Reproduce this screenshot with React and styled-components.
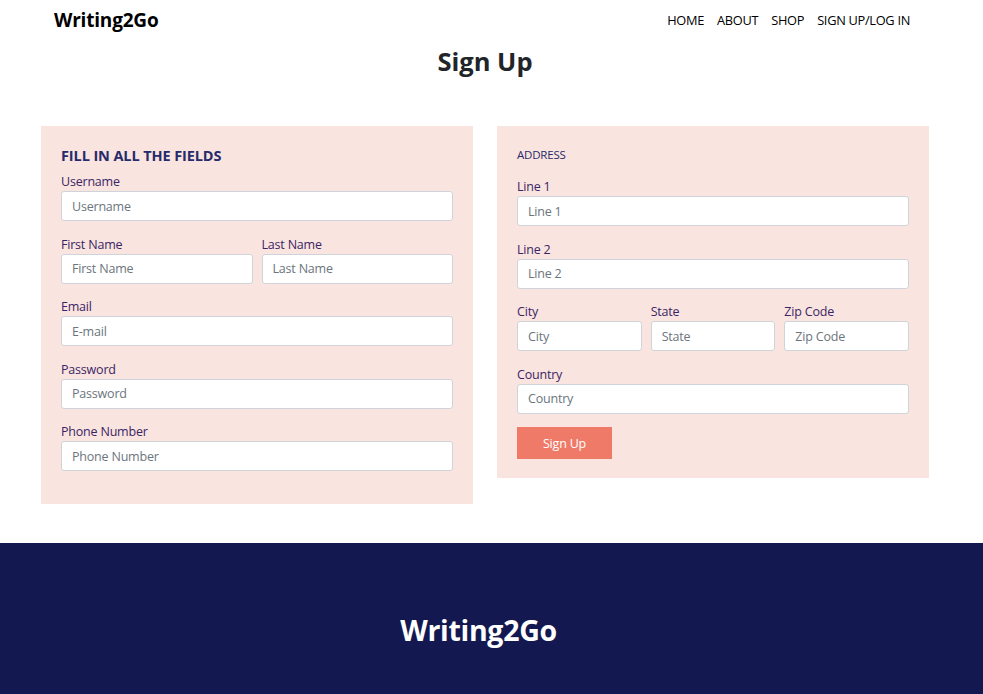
import React from "react";
import styled, { createGlobalStyle } from "styled-components";

const Global = createGlobalStyle`
  html, body { margin: 0; padding: 0; background: #fff; }
  body { font-family: "Open Sans", "Noto Sans", sans-serif; color: #212529; }
  * { box-sizing: border-box; }
`;

const Nav = styled.header`
  height: 40px;
  display: flex;
  align-items: center;
  justify-content: space-between;
  padding: 0 73px 0 54px;
`;

const Logo = styled.div`
  font-size: 19px;
  font-weight: 700;
  color: #000;
  letter-spacing: -0.2px;
`;

const Links = styled.nav`
  display: flex;
  gap: 13px;
`;

const NavLink = styled.a`
  font-size: 12.8px;
  color: #000;
  text-decoration: none;
  letter-spacing: -0.3px;
`;

const Title = styled.h1`
  margin: 0;
  padding: 4px 13px 47px 0;
  text-align: center;
  font-size: 25.5px;
  line-height: 35px;
  font-weight: 700;
  color: #212529;
`;

const Cards = styled.main`
  display: grid;
  grid-template-columns: 432px 432px;
  gap: 24px;
  margin-left: 41px;
  align-items: start;
`;

const Card = styled.section`
  background: #f9e4df;
  padding: 20px 20px ${(p) => p.$pb}px;
`;

const Heading = styled.h2`
  margin: 0 0 8px;
  font-size: 14.5px;
  line-height: 20px;
  font-weight: 700;
  color: #272a6b;
  letter-spacing: -0.1px;
`;

const SubHeading = styled.h3`
  margin: 0 0 16px;
  font-size: 11.5px;
  line-height: 17px;
  font-weight: 400;
  color: #272a6b;
  letter-spacing: -0.2px;
`;

const Row = styled.div`
  display: grid;
  grid-template-columns: repeat(${(p) => p.$cols || 1}, minmax(0, 1fr));
  gap: 9px;
  margin-bottom: 15.5px;
`;

const Field = styled.label`
  display: flex;
  flex-direction: column;
  min-width: 0;
`;

const Label = styled.span`
  font-size: 12.5px;
  line-height: 16px;
  margin-bottom: 1px;
  color: #3b2466;
  letter-spacing: -0.2px;
`;

const Input = styled.input`
  width: 100%;
  min-width: 0;
  height: 30px;
  border: 1px solid #ced4da;
  border-radius: 3px;
  background: #fff;
  padding: 0 10px;
  font-family: inherit;
  font-size: 12.5px;
  letter-spacing: -0.2px;
  color: #495057;
  outline: none;
  &::placeholder { color: #6c757d; }
`;

const Button = styled.button`
  display: block;
  margin-top: -2px;
  width: 95px;
  height: 32px;
  border: none;
  background: #ef7a68;
  color: #fff;
  font-family: inherit;
  font-size: 12.5px;
  letter-spacing: -0.2px;
  cursor: pointer;
`;

const Footer = styled.footer`
  margin-top: 39px;
  background: #141850;
  padding: 68px 26px 70px 0;
  text-align: center;
`;

const FooterLogo = styled.div`
  font-size: 28.5px;
  line-height: 38px;
  font-weight: 700;
  color: #fff;
  letter-spacing: -0.3px;
`;

const F = ({ label, ph }) => (
  <Field>
    <Label>{label}</Label>
    <Input placeholder={ph || label} />
  </Field>
);

export default function App() {
  return (
    <>
      <Global />
      <Nav>
        <Logo>Writing2Go</Logo>
        <Links>
          <NavLink href="#">HOME</NavLink>
          <NavLink href="#">ABOUT</NavLink>
          <NavLink href="#">SHOP</NavLink>
          <NavLink href="#">SIGN UP/LOG IN</NavLink>
        </Links>
      </Nav>
      <Title>Sign Up</Title>
      <Cards>
        <Card $pb={17}>
          <Heading>FILL IN ALL THE FIELDS</Heading>
          <Row><F label="Username" /></Row>
          <Row $cols={2}>
            <F label="First Name" />
            <F label="Last Name" />
          </Row>
          <Row><F label="Email" ph="E-mail" /></Row>
          <Row><F label="Password" /></Row>
          <Row><F label="Phone Number" /></Row>
        </Card>
        <Card $pb={19}>
          <SubHeading>ADDRESS</SubHeading>
          <Row><F label="Line 1" /></Row>
          <Row><F label="Line 2" /></Row>
          <Row $cols={3}>
            <F label="City" />
            <F label="State" />
            <F label="Zip Code" />
          </Row>
          <Row><F label="Country" /></Row>
          <Button>Sign Up</Button>
        </Card>
      </Cards>
      <Footer>
        <FooterLogo>Writing2Go</FooterLogo>
      </Footer>
    </>
  );
}
